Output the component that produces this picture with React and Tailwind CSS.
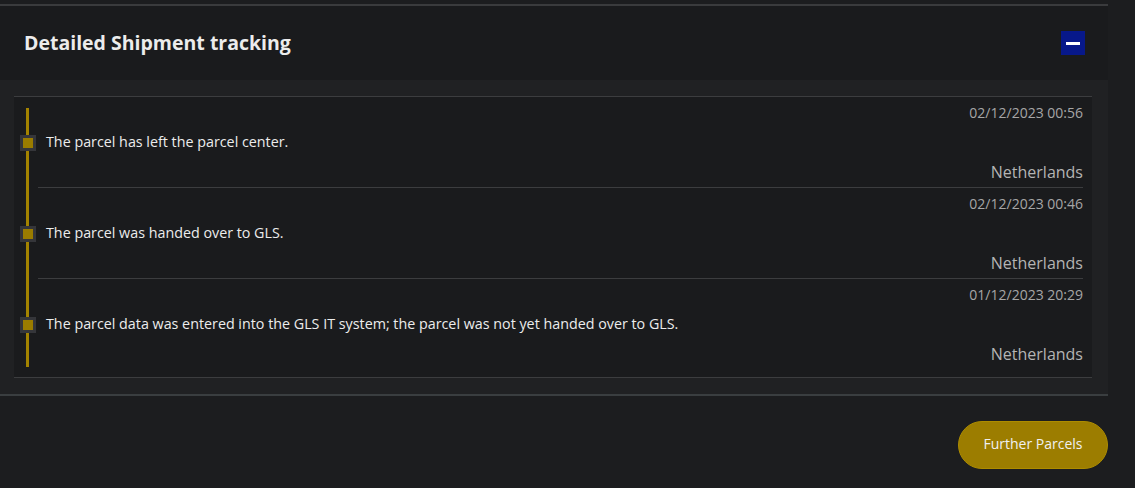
import React from "react";

const events = [
  { time: "02/12/2023 00:56", text: "The parcel has left the parcel center.", place: "Netherlands" },
  { time: "02/12/2023 00:46", text: "The parcel was handed over to GLS.", place: "Netherlands" },
  { time: "01/12/2023 20:29", text: "The parcel data was entered into the GLS IT system; the parcel was not yet handed over to GLS.", place: "Netherlands" },
];

export default function App() {
  return (
    <div className="w-[1135px] h-[488px] bg-[#1c1d1f] overflow-hidden" style={{ fontFamily: "'Open Sans', 'Noto Sans', sans-serif" }}>
      <div className="w-[1108px] pt-[4px]">
        <section className="bg-[#1a1b1d] border-t-2 border-[#3a3b3d]">
          <div className="h-[74px] flex items-center justify-between pl-6 pr-[23px]">
            <h2 className="text-[19.5px] font-bold text-[#ececec]">Detailed Shipment tracking</h2>
            <button className="w-6 h-6 bg-[#07188a] flex items-center justify-center">
              <span className="block w-[14px] h-[3px] bg-white" />
            </button>
          </div>
          <div className="bg-[#202123] pt-4 pb-[16px] pl-[14px] pr-[16px] border-b-2 border-[#3a3e40]">
            <div className="relative bg-[#1a1b1d] border-y border-[#3c3d3f]">
              <div className="absolute left-[12px] top-[11px] bottom-[10px] w-[3px] bg-[#a38300]" />
              {events.map((e, i) => (
                <div
                  key={i}
                  className={`relative ml-6 mr-[9px] flex flex-col pt-[6px] ${i < events.length - 1 ? "h-[91px] border-b border-[#3c3d3f]" : "h-[98px]"}`}
                >
                  <div className="absolute left-[-18px] top-[38px] w-4 h-4 bg-[#35363a] flex items-center justify-center">
                    <div className="w-[10px] h-[10px] bg-[#9a7c00]" />
                  </div>
                  <div className="text-right text-[14px] leading-5 text-[#a6a6a6]">{e.time}</div>
                  <div className="mt-[9px] pl-2 text-[14.3px] leading-5 text-[#ececec]">{e.text}</div>
                  <div className="mt-[10px] text-right text-[16px] leading-5 text-[#b4b4b4]">{e.place}</div>
                </div>
              ))}
            </div>
          </div>
        </section>
        <div className="flex justify-end mt-[25px]">
          <button className="w-[150px] h-[48px] rounded-full bg-[#9c7d00] border border-[#ad8c00] text-[14px] text-[#f0f0f0] pb-[3px]">
            Further Parcels
          </button>
        </div>
      </div>
    </div>
  );
}
